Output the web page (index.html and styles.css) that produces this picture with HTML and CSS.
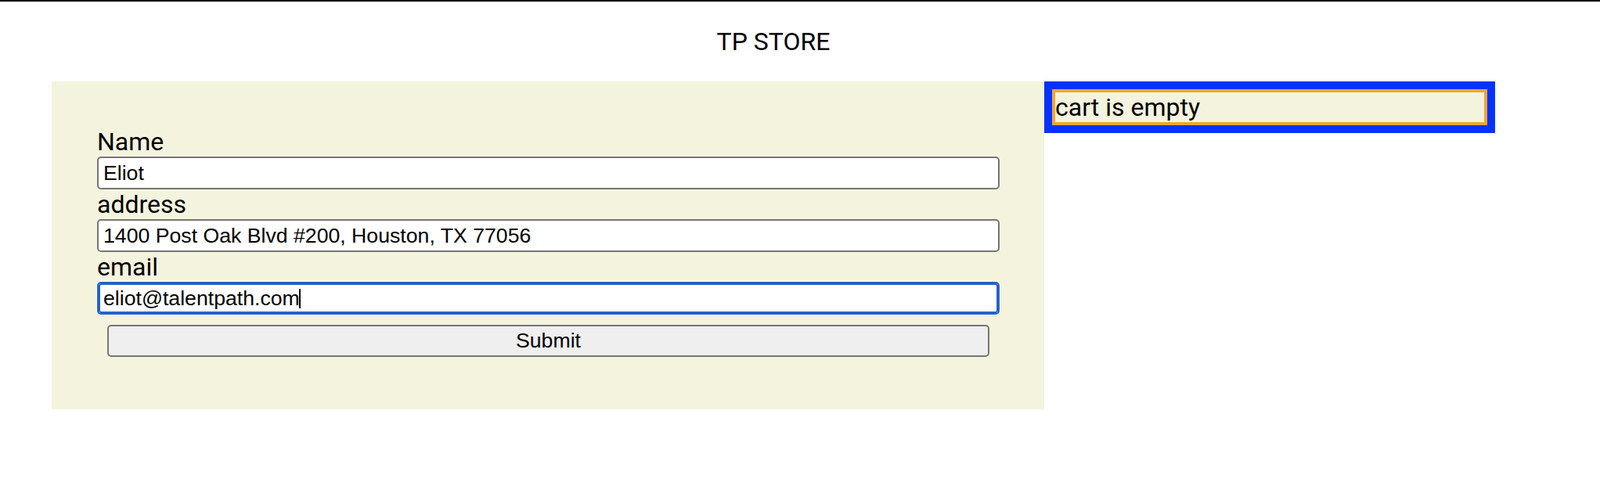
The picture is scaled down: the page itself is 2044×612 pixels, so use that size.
FILE: index.html
```html
<!DOCTYPE html>
<html lang="en">
<head>
<meta charset="utf-8">
<title>TP STORE</title>
<link rel="stylesheet" href="styles.css">
</head>
<body>
<div class="topbar"></div>
<h1 class="title">TP STORE</h1>
<div class="layout">
  <form class="checkout">
    <label class="field-label" for="name">Name</label>
    <input class="field" id="name" type="text" value="Eliot">
    <label class="field-label" for="address">address</label>
    <input class="field" id="address" type="text" value="1400 Post Oak Blvd #200, Houston, TX 77056">
    <label class="field-label" for="email">email</label>
    <div class="field-wrap">
      <input class="field field-focus" id="email" type="text" value="eliot@talentpath.com">
      <span class="caret"></span>
    </div>
    <button class="submit" type="button">Submit</button>
  </form>
  <aside class="cart">
    <div class="cart-inner">cart is empty</div>
  </aside>
</div>
</body>
</html>
```

FILE: styles.css
```css
html, body {
  margin: 0;
  padding: 0;
  background: #ffffff;
}

body {
  font-family: Roboto, "Liberation Sans", sans-serif;
  font-size: 32px;
  color: #000;
}

.topbar {
  height: 2px;
  background: #000;
}

.title {
  margin: 32px 0 32px 66px;
  width: 1844px;
  text-align: center;
  font-weight: 400;
  font-size: 32px;
  line-height: 38px;
}

.layout {
  display: flex;
  align-items: flex-start;
  margin-left: 66px;
  width: 1844px;
}

.checkout {
  width: 1268px;
  box-sizing: border-box;
  background: #f4f4de;
  padding: 58px 57px 67px 58px;
  margin: 0;
}

.field-label {
  display: block;
  line-height: 38px;
  height: 38px;
}

.field-wrap {
  position: relative;
}

.field {
  display: block;
  width: 100%;
  height: 42px;
  box-sizing: border-box;
  margin: 0;
  padding: 0 6px;
  border: 2px solid #767676;
  border-radius: 5px;
  background: #fff;
  font-family: "Liberation Sans", Arial, sans-serif;
  font-size: 26.67px;
  color: #000;
  outline: none;
}

.field-focus {
  border-color: #2662c9;
  box-shadow: inset 0 0 0 2px #2662c9, 0 0 0 1px #ffffff;
}

.caret {
  position: absolute;
  left: 258px;
  top: 9px;
  width: 2px;
  height: 25px;
  background: #000;
}

.submit {
  display: block;
  width: calc(100% - 26px);
  height: 41px;
  margin: 13px 13px 0;
  box-sizing: border-box;
  border: 2px solid #767676;
  border-radius: 5px;
  background: #efefef;
  font-family: "Liberation Sans", Arial, sans-serif;
  font-size: 26.67px;
  color: #000;
  padding: 0;
}

.cart {
  width: 576px;
  box-sizing: border-box;
  border: 10px solid #0433ff;
}

.cart-inner {
  border: 4px solid #f6a434;
  background: #f4f4de;
  height: 38px;
  line-height: 38px;
  font-size: 32px;
}
```
